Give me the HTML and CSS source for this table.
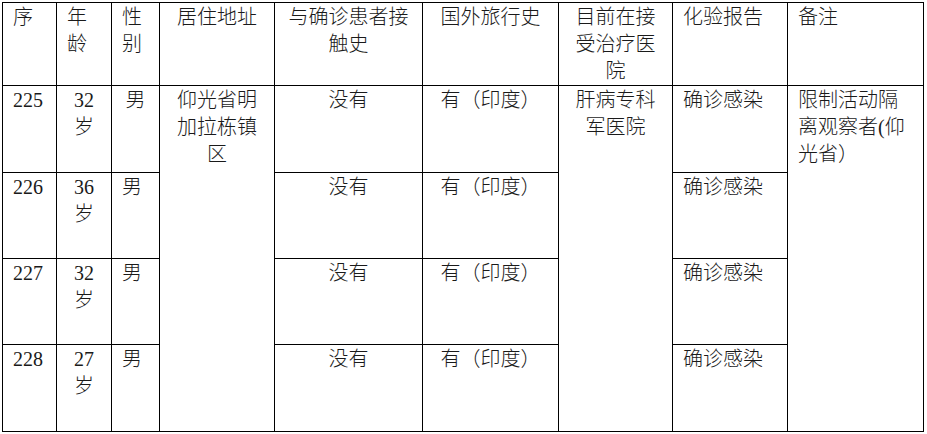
FILE: index.html
```html
<!DOCTYPE html>
<html lang="zh-CN">
<head>
<meta charset="utf-8">
<title>病例表</title>
<link rel="stylesheet" href="styles.css">
</head>
<body>
<table class="cases">
  <colgroup>
    <col class="c1"><col class="c2"><col class="c3"><col class="c4"><col class="c5"><col class="c6"><col class="c7"><col class="c8"><col class="c9">
  </colgroup>
  <tr class="head">
    <td class="left">序</td>
    <td class="left">年<br>龄</td>
    <td class="left">性<br>别</td>
    <td class="center">居住地址</td>
    <td class="center">与确诊患者接<br>触史</td>
    <td class="center">国外旅行史</td>
    <td class="center">目前在接<br>受治疗医<br>院</td>
    <td class="left">化验报告</td>
    <td class="left">备注</td>
  </tr>
  <tr class="r1">
    <td class="left">225</td>
    <td class="center">32<br>岁</td>
    <td class="center">男</td>
    <td class="center" rowspan="4">仰光省明<br>加拉栋镇<br>区</td>
    <td class="center">没有</td>
    <td class="center">有（印度）</td>
    <td class="center" rowspan="4">肝病专科<br>军医院</td>
    <td class="left">确诊感染</td>
    <td class="left" rowspan="4">限制活动隔<br>离观察者(仰<br>光省）</td>
  </tr>
  <tr class="r2">
    <td class="left">226</td>
    <td class="center">36<br>岁</td>
    <td class="left">男</td>
    <td class="center">没有</td>
    <td class="center">有（印度）</td>
    <td class="left">确诊感染</td>
  </tr>
  <tr class="r3">
    <td class="left">227</td>
    <td class="center">32<br>岁</td>
    <td class="left">男</td>
    <td class="center">没有</td>
    <td class="center">有（印度）</td>
    <td class="left">确诊感染</td>
  </tr>
  <tr class="r4">
    <td class="left">228</td>
    <td class="center">27<br>岁</td>
    <td class="left">男</td>
    <td class="center">没有</td>
    <td class="center">有（印度）</td>
    <td class="left">确诊感染</td>
  </tr>
</table>
</body>
</html>
```

FILE: styles.css
```css
html, body {
  margin: 0;
  padding: 0;
  background: #ffffff;
}

body {
  padding: 2px 0 0 2px;
}

.cases {
  border-collapse: collapse;
  table-layout: fixed;
  width: 921px;
  font-family: "Liberation Serif", "Noto Sans CJK SC", serif;
  font-size: 20px;
  font-weight: 300;
  line-height: 27px;
  color: #1a1a1a;
}

.cases td {
  border: 1px solid #000000;
  vertical-align: top;
  padding: 1px 0 0 0;
  white-space: nowrap;
  overflow: hidden;
}

.cases td.left {
  text-align: left;
  padding-left: 10px;
}

.cases td.center {
  text-align: center;
}

.c1 { width: 54px; }
.c2 { width: 55px; }
.c3 { width: 48px; }
.c4 { width: 115px; }
.c5 { width: 148px; }
.c6 { width: 136px; }
.c7 { width: 114px; }
.c8 { width: 115px; }
.c9 { width: 136px; }

.head { height: 82px; }
.r1 { height: 87px; }
.r2 { height: 86px; }
.r3 { height: 86px; }
.r4 { height: 87px; }
```
